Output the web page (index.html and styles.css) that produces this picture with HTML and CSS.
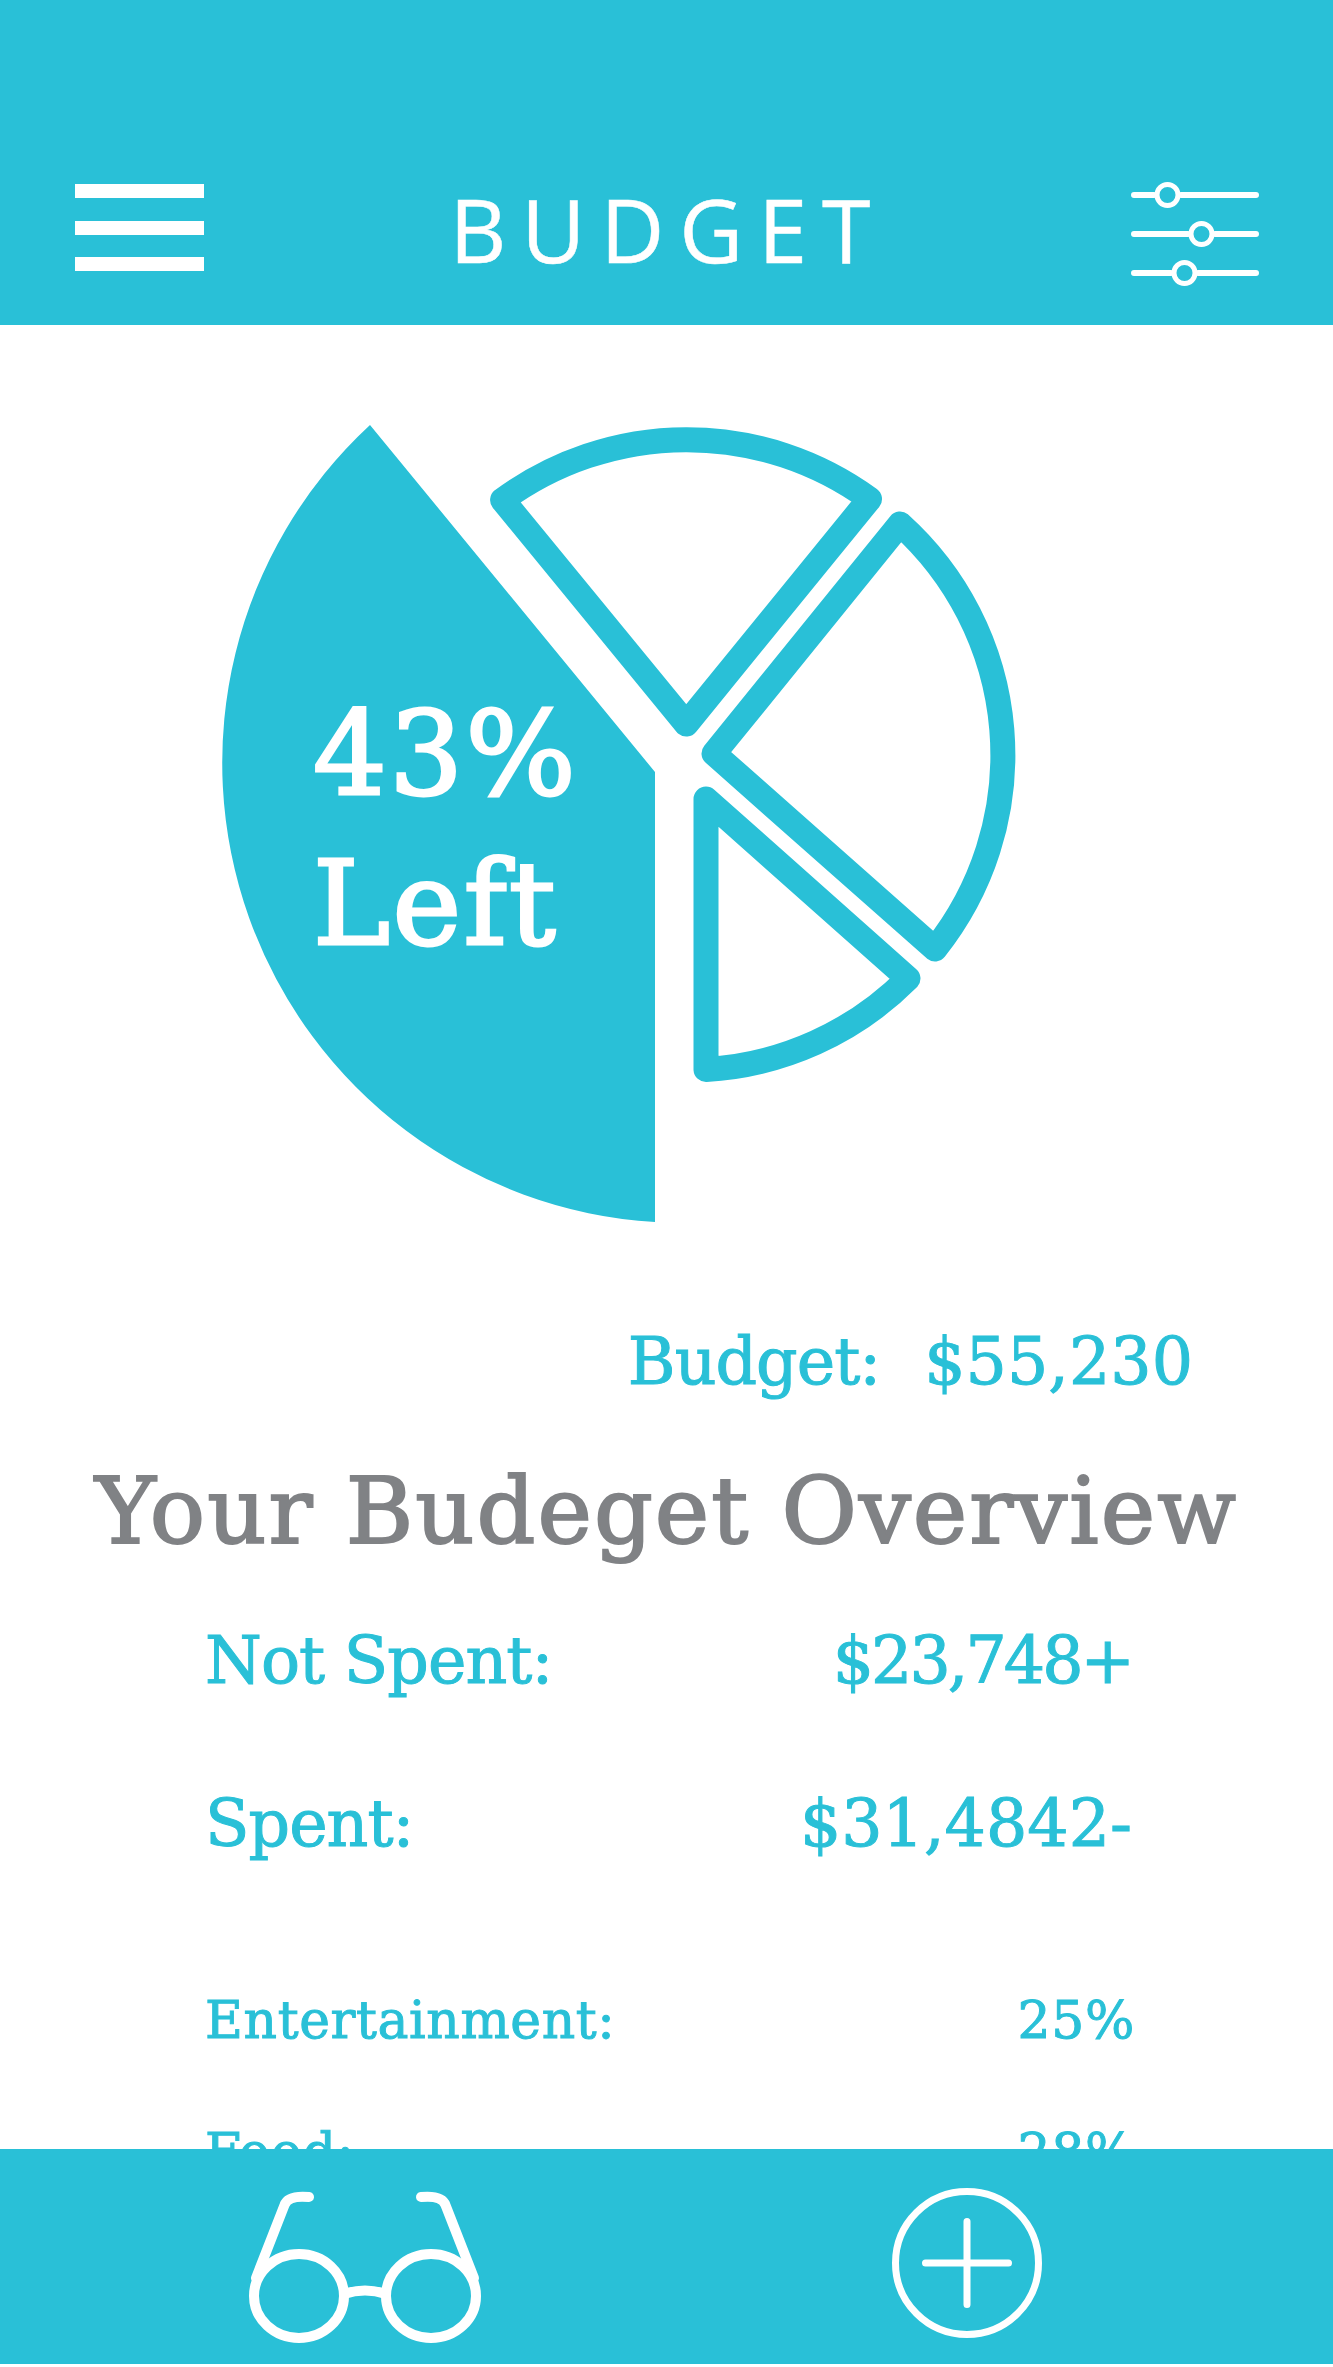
FILE: index.html
```html
<!DOCTYPE html>
<html lang="en">
<head>
  <meta charset="UTF-8">
  <meta name="viewport" content="width=device-width, initial-scale=1">
  <title>Budget</title>
  <link rel="stylesheet" href="styles.css">
</head>
<body>
  <div class="app">
    <header class="topbar">
      <div class="hamburger"><span></span><span></span><span></span></div>
      <h1>BUDGET</h1>
      <svg class="sliders" width="128" height="104" viewBox="1131 182 128 104">
        <g class="slider-lines">
          <path d="M1134 195H1154M1181 195H1256"/>
          <path d="M1134 234H1188M1215 234H1256"/>
          <path d="M1134 273H1171M1198 273H1256"/>
        </g>
        <g class="slider-knobs">
          <circle cx="1167.5" cy="195" r="10.5"/>
          <circle cx="1201.5" cy="234" r="10.5"/>
          <circle cx="1184.5" cy="273" r="10.5"/>
        </g>
      </svg>
    </header>

    <main class="content">
      <section class="chart">
        <svg class="pie" width="800" height="810" viewBox="220 420 800 810">
          <path class="slice-full" d="M370 425A460 460 0 0 0 655 1222V772Z"/>
          <path class="slice" d="M502.6 500A311 311 0 0 1 869.5 499L686.3 724Z"/>
          <path class="slice" d="M900 524A311 311 0 0 1 935 949L714 753.5Z"/>
          <path class="slice" d="M706 799L908 978.5A311 311 0 0 1 706 1069.5Z"/>
        </svg>
        <div class="chart-label">43%<br>Left</div>
      </section>

      <div class="budget-total">
        <span class="budget-name">Budget:</span>
        <span>$55,230</span>
      </div>

      <h2>Your Budeget Overview</h2>

      <div class="row row-big row-notspent"><span>Not Spent:</span><span class="tight">$23,748+</span></div>
      <div class="row row-big row-spent"><span>Spent:</span><span>$31,4842-</span></div>
      <div class="row row-small row-ent"><span>Entertainment:</span><span>25%</span></div>
      <div class="row row-small row-food"><span>Food:</span><span>28%</span></div>
    </main>

    <nav class="bottombar">
      <svg class="glasses" width="250" height="165" viewBox="240 2185 250 165">
        <ellipse cx="299" cy="2296" rx="45" ry="42"/>
        <ellipse cx="431" cy="2296" rx="45" ry="42"/>
        <path d="M344 2294Q365 2287 386 2294"/>
        <path d="M256 2278L284.5 2205Q288 2195 309 2197"/>
        <path d="M474 2278L445.5 2205Q442 2195 421 2197"/>
      </svg>
      <svg class="plus" width="150" height="150" viewBox="0 0 150 150">
        <circle cx="75" cy="75" r="71.5"/>
        <path d="M75 33.5V116.5M33.5 75H116.5"/>
      </svg>
    </nav>
  </div>
</body>
</html>
```

FILE: styles.css
```css
/* colores de la app */
:root {
  --teal: #29c0d7;
  --grey: #808285;
}

html, body {
  margin: 0;
  padding: 0;
  background: #fff;
}

.app {
  height: 2367px;
  display: flex;
  flex-direction: column;
  overflow: hidden;
  font-family: "DejaVu Serif", serif;
  color: var(--teal);
}

/* barra de arriba */
.topbar {
  flex: none;
  height: 325px;
  box-sizing: border-box;
  padding: 184px 74px 0 75px;
  background: var(--teal);
  display: flex;
  justify-content: space-between;
  align-items: flex-start;
}

.hamburger {
  width: 129px;
  height: 87px;
  display: flex;
  flex-direction: column;
  justify-content: space-between;
}

.hamburger span {
  display: block;
  height: 14px;
  background: #fff;
}

.topbar h1 {
  margin: 1px 0 0;
  font-family: "Open Sans", sans-serif;
  font-weight: 400;
  font-size: 88px;
  line-height: 88px;
  letter-spacing: 15px;
  color: #fff;
  -webkit-text-stroke: 0.5px #fff;
}

.sliders {
  display: block;
  margin-top: -2px;
}

.slider-lines {
  fill: none;
  stroke: #fff;
  stroke-width: 6;
  stroke-linecap: round;
}

.slider-knobs {
  fill: var(--teal);
  stroke: #fff;
  stroke-width: 5;
}

/* contenido */
.content {
  flex: 1;
  min-height: 0;
  overflow: hidden;
}

.chart {
  position: relative;
  height: 997px;
  box-sizing: border-box;
  padding: 95px 0 0 220px;
}

.pie {
  display: block;
}

.slice-full {
  fill: var(--teal);
}

.slice {
  fill: #fff;
  stroke: var(--teal);
  stroke-width: 25;
  stroke-linejoin: round;
}

.chart-label {
  position: absolute;
  left: 313px;
  top: 354px;
  font-size: 116px;
  line-height: 150px;
  letter-spacing: 2.5px;
  color: #fff;
  -webkit-text-stroke: 3px #fff;
}

.budget-total {
  display: flex;
  justify-content: flex-end;
  gap: 44px;
  padding-right: 140px;
  font-size: 65px;
  line-height: 80px;
  -webkit-text-stroke: 1px var(--teal);
}

.budget-name {
  letter-spacing: -1px;
}

h2 {
  margin: 55px 0 0;
  text-align: center;
  font-size: 92px;
  line-height: 110px;
  font-weight: 400;
  letter-spacing: 2px;
  color: var(--grey);
  -webkit-text-stroke: 2px var(--grey);
}

.row {
  display: flex;
  justify-content: space-between;
  padding: 0 201px 0 205px;
  -webkit-text-stroke: 1px var(--teal);
}

.row-big {
  font-size: 65px;
  line-height: 80px;
  letter-spacing: -1px;
}

.row-big .tight {
  letter-spacing: -3px;
}

.row-spent span:last-child {
  letter-spacing: 0;
}

.row-small {
  padding-right: 198px;
  font-size: 52px;
  line-height: 64px;
  letter-spacing: 0.6px;
}

.row-notspent { margin-top: 54px; }
.row-spent { margin-top: 83px; }
.row-ent { margin-top: 124px; }
.row-food { margin-top: 68px; }

/* barra de abajo */
.bottombar {
  flex: none;
  height: 215px;
  margin-bottom: 3px;
  box-sizing: border-box;
  background: var(--teal);
  display: flex;
  align-items: flex-start;
  padding: 36px 0 0 240px;
  gap: 402px;
}

.glasses {
  display: block;
  fill: none;
  stroke: #fff;
  stroke-width: 10;
  stroke-linecap: round;
}

.plus {
  display: block;
  margin-top: 3px;
  fill: none;
  stroke: #fff;
  stroke-width: 7;
  stroke-linecap: round;
}
```
